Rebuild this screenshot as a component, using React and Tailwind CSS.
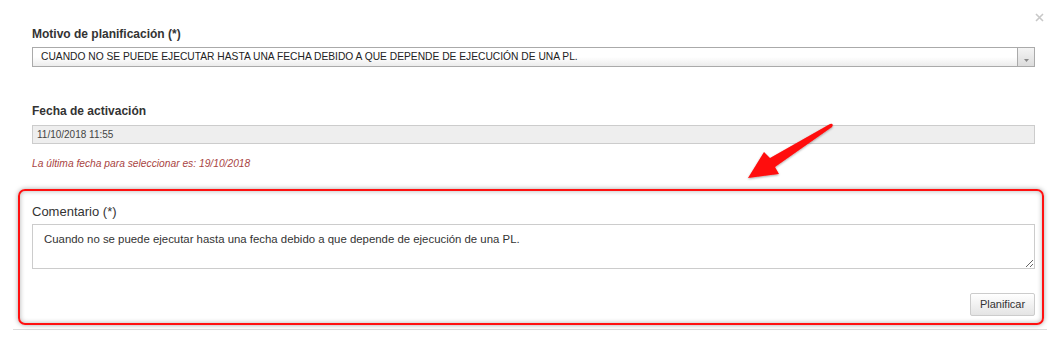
import React from "react";

export default function App() {
  return (
    <div className="relative w-[1061px] h-[346px] bg-white text-[#333] font-['Liberation_Sans',Arial,sans-serif] overflow-hidden">
      {/* close */}
      <svg className="absolute left-[1035px] top-[13px]" width="9" height="9" viewBox="0 0 9 9">
        <path d="M1 1 L8 8 M8 1 L1 8" stroke="#c8c8c8" strokeWidth="1.6" />
      </svg>

      <div className="pl-8 pr-[26px] pt-[27px]">
        <div className="text-[12px] leading-[14px] font-bold">Motivo de planificación (*)</div>
        <div className="mt-[6px] h-[20px] flex border border-[#aaa] bg-linear-to-b from-white from-50% to-[#ececec]">
          <div className="flex-1 pl-[8px] text-[10.25px] leading-[18px] text-[#222] whitespace-nowrap overflow-hidden">
            CUANDO NO SE PUEDE EJECUTAR HASTA UNA FECHA DEBIDO A QUE DEPENDE DE EJECUCIÓN DE UNA PL.
          </div>
          <div className="w-[17px] border-l border-[#aaa] bg-linear-to-b from-[#f4f4f4] to-[#dcdcdc] flex items-end justify-center pb-[4px]">
            <svg width="5" height="3" viewBox="0 0 5 3">
              <path d="M0 0 L5 0 L2.5 3 Z" fill="#888" />
            </svg>
          </div>
        </div>

        <div className="mt-[37px] text-[12px] leading-[14px] font-bold">Fecha de activación</div>
        <div className="mt-[7px] h-[19px] border border-[#ccc] bg-[#eeeeee] pl-[4px] text-[10px] leading-[17px] text-[#444]">
          11/10/2018 11:55
        </div>

        <div className="mt-[14px] text-[10.25px] leading-[12px] italic text-[#a94442]">
          La última fecha para seleccionar es: 19/10/2018
        </div>

        <div className="mt-[34px] text-[13px] leading-[15px]">Comentario (*)</div>
        <textarea
          readOnly
          className="mt-[5px] block w-full h-[45px] border border-[#ccc] pl-[11px] pt-[7px] text-[11.4px] leading-[14px] text-[#333] outline-none font-['Liberation_Sans',Arial,sans-serif]"
          defaultValue="Cuando no se puede ejecutar hasta una fecha debido a que depende de ejecución de una PL."
        />

        <div className="mt-[24px] flex justify-end">
          <button className="w-[65px] h-[23px] border border-[#ccc] rounded-[2px] bg-linear-to-b from-white to-[#e4e4e4] text-[11px] text-[#333]">
            Planificar
          </button>
        </div>
      </div>

      <div className="ml-[13px] mt-[13px] w-[1034px] border-t border-[#dcdcdc]" />

      {/* annotation box */}
      <div className="absolute left-[18px] top-[189px] w-[1026px] h-[136px] rounded-[7px] border-2 border-[#ff1010] shadow-[0_0_5px_rgba(0,0,0,0.35),inset_0_0_5px_rgba(0,0,0,0.3)] pointer-events-none" />

      {/* annotation arrow */}
      <svg className="absolute left-0 top-0 pointer-events-none" width="1061" height="346" viewBox="0 0 1061 346">
        <defs>
          <filter id="sh" x="-20%" y="-20%" width="140%" height="140%">
            <feDropShadow dx="0" dy="1" stdDeviation="1.2" floodColor="#000" floodOpacity="0.35" />
          </filter>
        </defs>
        <path
          d="M748 178 L764 152 L770 158 L830 124 Q834 123 832 127 L775 167 L779 174 Z"
          fill="#ff0a0a"
          filter="url(#sh)"
        />
      </svg>
    </div>
  );
}
